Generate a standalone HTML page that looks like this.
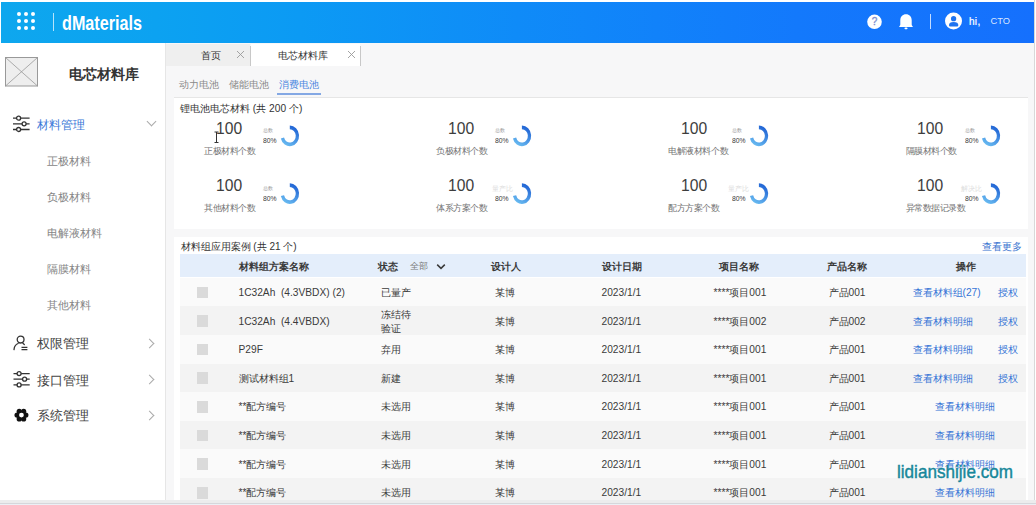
<!DOCTYPE html>
<html><head><meta charset="utf-8">
<style>
*{margin:0;padding:0;box-sizing:border-box}
html,body{width:1036px;height:505px;overflow:hidden;background:#fff;font-family:"Liberation Sans",sans-serif;color:#333}
.a{position:absolute;white-space:nowrap;line-height:1}
#hdr{position:absolute;left:1px;top:2px;width:1033px;height:41px;background:linear-gradient(90deg,#0ea7ee 0%,#0ca2f1 15%,#0c9af4 29%,#0f8bf8 50%,#1379fc 77%,#1570fd 100%)}
.dot{position:absolute;width:4px;height:4px;border-radius:50%;background:#fff}
#side{position:absolute;left:0;top:43px;width:166px;height:457px;background:#fff;border-right:1.5px solid #e6e6e6}
#main{position:absolute;left:166px;top:43px;width:868px;height:457px;background:#f7f7f8}
.card{position:absolute;background:#fff}
.sub{color:#858585;font-size:10.8px}
.mi{color:#444;font-size:13px}
.chev{position:absolute;width:7px;height:7px;border-right:1px solid #aaa;border-bottom:1px solid #aaa}
.num{position:absolute;font-size:17px;color:#3d3d3d;line-height:1;transform:scaleX(.92);transform-origin:0 0}
.lbl{position:absolute;font-size:9px;letter-spacing:-.45px;color:#747474;line-height:1;white-space:nowrap}
.pct{position:absolute;font-size:8px;color:#3a3a3a;line-height:1;transform:scaleX(.85);transform-origin:0 0}
.tiny{position:absolute;font-size:4.5px;color:#999;line-height:1;white-space:nowrap}
.donut{position:absolute;width:22px;height:22px}
.tiny2{position:absolute;font-size:7px;color:#ddd;line-height:1;white-space:nowrap}
.th{position:absolute;font-size:10.2px;font-weight:bold;color:#3a3a3a;line-height:1;white-space:nowrap}
.td{position:absolute;font-size:10.2px;color:#3a3a3a;line-height:1;white-space:nowrap}
.lk{position:absolute;font-size:10.2px;color:#3574d6;line-height:1;white-space:nowrap}
.row{position:absolute;left:6px;width:845px}
.cb{position:absolute;left:23px;width:10px;height:11px;background:#dcdcdc}
</style></head><body>

<!-- header -->
<div id="hdr">
  <div class="dot" style="left:16px;top:9.9px"></div><div class="dot" style="left:23px;top:9.9px"></div><div class="dot" style="left:29.5px;top:9.9px"></div>
  <div class="dot" style="left:16px;top:16.9px"></div><div class="dot" style="left:23px;top:16.9px"></div><div class="dot" style="left:29.5px;top:16.9px"></div>
  <div class="dot" style="left:16px;top:23.9px"></div><div class="dot" style="left:23px;top:23.9px"></div><div class="dot" style="left:29.5px;top:23.9px"></div>
  <div style="position:absolute;left:52px;top:11px;width:1px;height:18px;background:rgba(255,255,255,.7)"></div>
  <div class="a" style="left:61px;top:10px;font-size:21px;font-weight:bold;color:#fff;transform:scaleX(.77);transform-origin:0 0">dMaterials</div>
  <svg style="position:absolute;left:863.7px;top:9.6px" width="20" height="20" viewBox="0 0 20 20"><circle cx="9.5" cy="9.8" r="7.3" fill="#fff"/><text x="9.6" y="13.4" text-anchor="middle" font-family="Liberation Sans" font-size="10" fill="#7d8fcf" stroke="#7d8fcf" stroke-width=".35">?</text></svg>
  <svg style="position:absolute;left:894.3px;top:6.6px" width="22" height="22" viewBox="0 0 22 22"><path d="M11 5.3 C7.6 5.3 5.3 7.8 5.3 11.2 L5.3 15.4 C5.3 16.3 4.4 17.1 4 17.9 L18 17.9 C17.6 17.1 16.7 16.3 16.7 15.4 L16.7 11.2 C16.7 7.8 14.4 5.3 11 5.3 Z" fill="#fff"/><rect x="9.5" y="18.5" width="3" height="1.7" rx=".8" fill="#fff"/></svg>
  <div style="position:absolute;left:928.5px;top:12px;width:1.2px;height:15px;background:rgba(255,255,255,.75)"></div>
  <svg style="position:absolute;left:941.3px;top:9px" width="24" height="24" viewBox="0 0 24 24"><circle cx="11.5" cy="10.1" r="8.5" fill="#fff"/><circle cx="11.6" cy="7.7" r="2.65" fill="#1f74f0"/><path d="M7 14 C7 12 8.6 10.9 11.6 10.9 C14.6 10.9 16.3 12 16.3 14 L16.3 14.2 C16.3 15.1 15.7 15.6 14.8 15.6 L8.5 15.6 C7.6 15.6 7 15.1 7 14.2 Z" fill="#1f74f0"/></svg>
  <div class="a" style="left:968px;top:15px;font-size:10px;color:#fff;-webkit-text-stroke:.2px #fff;letter-spacing:.3px">hi,</div>
  <div class="a" style="left:989.5px;top:14.8px;font-size:9.3px;color:rgba(255,255,255,.85)">CTO</div>
</div>

<div id="side">
  <svg style="position:absolute;left:5px;top:14px" width="34" height="30" viewBox="0 0 34 30"><rect x=".5" y=".5" width="32" height="28.5" fill="#eeeeee" stroke="#999" stroke-width="1"/><path d="M.5 .5 L32.5 29 M32.5 .5 L.5 29" stroke="#999" stroke-width=".8"/></svg>
  <div class="a" style="left:69px;top:24.5px;font-size:13.8px;font-weight:bold;color:#333">电芯材料库</div>
  <svg style="position:absolute;left:12px;top:72px" width="20" height="18" viewBox="0 0 20 18"><g stroke="#333" stroke-width="1.3" fill="#fff"><path d="M1 3.2H17.6M1 8.8H17.6M1 14.5H17.6"/><circle cx="6.6" cy="3.2" r="2"/><circle cx="12.1" cy="8.8" r="2"/><circle cx="6.6" cy="14.5" r="2"/></g></svg>
  <div class="a" style="left:37px;top:77px;font-size:11.5px;color:#3b78d8">材料管理</div>
  <div class="chev" style="left:148px;top:75px;transform:rotate(45deg)"></div>
  <div class="a sub" style="left:46.5px;top:113px">正极材料</div>
  <div class="a sub" style="left:46.5px;top:149px">负极材料</div>
  <div class="a sub" style="left:46.5px;top:185px">电解液材料</div>
  <div class="a sub" style="left:46.5px;top:221px">隔膜材料</div>
  <div class="a sub" style="left:46.5px;top:257px">其他材料</div>
  <svg style="position:absolute;left:12px;top:289px" width="20" height="20" viewBox="0 0 20 20"><g stroke="#333" stroke-width="1.3" fill="none" stroke-linecap="round"><circle cx="8.6" cy="7.6" r="3.4"/><path d="M2 17.6 C2.3 14.2 4 12.3 6.1 11.5 M10.9 11.3 L12.3 12.5"/><path d="M9.5 15.45H15.4M9.5 17.6H15.4" stroke-linecap="butt"/></g></svg>
  <div class="a mi" style="left:37px;top:294px">权限管理</div>
  <div class="chev" style="left:146px;top:297px;transform:rotate(-45deg)"></div>
  <svg style="position:absolute;left:12px;top:326.5px" width="20" height="18" viewBox="0 0 20 18"><g stroke="#333" stroke-width="1.3" fill="#fff"><path d="M1.5 3.6H17.7M1.5 9.2H17.7M1.5 14.9H17.7"/><circle cx="7.1" cy="3.6" r="2"/><circle cx="12.6" cy="9.2" r="2"/><circle cx="7.1" cy="14.9" r="2"/></g></svg>
  <div class="a mi" style="left:37px;top:331px">接口管理</div>
  <div class="chev" style="left:146px;top:333px;transform:rotate(-45deg)"></div>
  <svg style="position:absolute;left:13px;top:364px" width="17" height="17" viewBox="0 0 17 17"><g fill="#111"><circle cx="12.85" cy="8.10" r="2.6"/><circle cx="10.65" cy="11.91" r="2.6"/><circle cx="6.25" cy="11.91" r="2.6"/><circle cx="4.05" cy="8.10" r="2.6"/><circle cx="6.25" cy="4.29" r="2.6"/><circle cx="10.65" cy="4.29" r="2.6"/><circle cx="8.45" cy="8.1" r="4.2"/></g><circle cx="8.45" cy="8.1" r="2.4" fill="#fff"/></svg>
  <div class="a mi" style="left:37px;top:366px">系统管理</div>
  <div class="chev" style="left:146px;top:369px;transform:rotate(-45deg)"></div>
</div>
<div id="main"></div>
<div style="position:absolute;left:166px;top:44px;width:84px;height:22px;background:#efefef"></div>
<div style="position:absolute;left:251px;top:44px;width:109px;height:22px;background:#fff"></div>
<div style="position:absolute;left:249.5px;top:46px;width:1px;height:20px;background:#c8c8c8"></div>
<div style="position:absolute;left:360px;top:46px;width:1px;height:20px;background:#c8c8c8"></div>
<div class="a" style="left:201px;top:50.6px;font-size:10px;color:#333">首页</div>
<svg style="position:absolute;left:236px;top:49.5px" width="9" height="9" viewBox="0 0 9 9"><path d="M1 1L8 8M8 1L1 8" stroke="#9a9a9a" stroke-width=".9"/></svg>
<div class="a" style="left:277.5px;top:50.6px;font-size:10px;color:#333">电芯材料库</div>
<svg style="position:absolute;left:347px;top:49.5px" width="9" height="9" viewBox="0 0 9 9"><path d="M1 1L8 8M8 1L1 8" stroke="#9a9a9a" stroke-width=".9"/></svg>

<div class="a" style="left:178.7px;top:79.5px;font-size:10.2px;color:#8a8a8a">动力电池</div>
<div class="a" style="left:229px;top:79.5px;font-size:10.2px;color:#8a8a8a">储能电池</div>
<div class="a" style="left:278.5px;top:79.5px;font-size:10.2px;color:#4a86e0">消费电池</div>
<div style="position:absolute;left:276.5px;top:93px;width:44.5px;height:1.6px;background:#84a8e4"></div>
<div style="position:absolute;left:174px;top:96.5px;width:854px;height:1px;background:#e6e6e6"></div>

<div class="card" style="left:174px;top:97.5px;width:854px;height:131px"></div>
<div class="a" style="left:180px;top:103.5px;font-size:10.2px;color:#333">锂电池电芯材料 (共 200 个)</div>


<!--KPI-->
<svg width="0" height="0" style="position:absolute"><defs><linearGradient id="dg" x1="0.7" y1="0" x2="0.2" y2="1"><stop offset="0" stop-color="#2468d6"/><stop offset="1" stop-color="#66b8f0"/></linearGradient></defs></svg>
<div class="num" style="left:216.1px;top:119.6px">100</div>
<div class="lbl" style="left:204.0px;top:147.0px">正极材料个数</div>
<div class="tiny" style="left:263.0px;top:129.0px">总数</div>
<div class="pct" style="left:263.0px;top:137.0px">80%</div>
<svg style="position:absolute;left:0;top:0;overflow:visible" width="1" height="1"><path transform="translate(289.80 135.90) scale(1 1.12) translate(-289.80 -135.90)" d="M289.80 128.30 A7.6 7.6 0 1 1 282.43 137.74" fill="none" stroke="url(#dg)" stroke-width="3.3"/></svg>
<div class="num" style="left:216.1px;top:177.2px">100</div>
<div class="lbl" style="left:204.0px;top:204.2px">其他材料个数</div>
<div class="tiny" style="left:263.0px;top:186.6px">总数</div>
<div class="pct" style="left:263.0px;top:194.6px">80%</div>
<svg style="position:absolute;left:0;top:0;overflow:visible" width="1" height="1"><path transform="translate(289.80 193.60) scale(1 1.12) translate(-289.80 -193.60)" d="M289.80 186.00 A7.6 7.6 0 1 1 282.43 195.44" fill="none" stroke="url(#dg)" stroke-width="3.3"/></svg>
<div class="num" style="left:447.7px;top:119.6px">100</div>
<div class="lbl" style="left:436.1px;top:147.0px">负极材料个数</div>
<div class="tiny" style="left:495.2px;top:129.0px">总数</div>
<div class="pct" style="left:495.2px;top:137.0px">80%</div>
<svg style="position:absolute;left:0;top:0;overflow:visible" width="1" height="1"><path transform="translate(521.90 135.90) scale(1 1.12) translate(-521.90 -135.90)" d="M521.90 128.30 A7.6 7.6 0 1 1 514.53 137.74" fill="none" stroke="url(#dg)" stroke-width="3.3"/></svg>
<div class="num" style="left:447.7px;top:177.2px">100</div>
<div class="lbl" style="left:436.1px;top:204.2px">体系方案个数</div>
<div class="tiny2" style="left:491.7px;top:184.8px">量产比</div>
<div class="pct" style="left:495.2px;top:194.6px">80%</div>
<svg style="position:absolute;left:0;top:0;overflow:visible" width="1" height="1"><path transform="translate(521.90 193.60) scale(1 1.12) translate(-521.90 -193.60)" d="M521.90 186.00 A7.6 7.6 0 1 1 514.53 195.44" fill="none" stroke="url(#dg)" stroke-width="3.3"/></svg>
<div class="num" style="left:680.5px;top:119.6px">100</div>
<div class="lbl" style="left:668.3px;top:147.0px">电解液材料个数</div>
<div class="tiny" style="left:731.7px;top:129.0px">总数</div>
<div class="pct" style="left:731.7px;top:137.0px">80%</div>
<svg style="position:absolute;left:0;top:0;overflow:visible" width="1" height="1"><path transform="translate(758.90 135.90) scale(1 1.12) translate(-758.90 -135.90)" d="M758.90 128.30 A7.6 7.6 0 1 1 751.53 137.74" fill="none" stroke="url(#dg)" stroke-width="3.3"/></svg>
<div class="num" style="left:680.5px;top:177.2px">100</div>
<div class="lbl" style="left:668.3px;top:204.2px">配方方案个数</div>
<div class="tiny2" style="left:728.2px;top:184.8px">量产比</div>
<div class="pct" style="left:731.7px;top:194.6px">80%</div>
<svg style="position:absolute;left:0;top:0;overflow:visible" width="1" height="1"><path transform="translate(758.90 193.60) scale(1 1.12) translate(-758.90 -193.60)" d="M758.90 186.00 A7.6 7.6 0 1 1 751.53 195.44" fill="none" stroke="url(#dg)" stroke-width="3.3"/></svg>
<div class="num" style="left:917.0px;top:119.6px">100</div>
<div class="lbl" style="left:905.5px;top:147.0px">隔膜材料个数</div>
<div class="tiny" style="left:964.5px;top:129.0px">总数</div>
<div class="pct" style="left:964.5px;top:137.0px">80%</div>
<svg style="position:absolute;left:0;top:0;overflow:visible" width="1" height="1"><path transform="translate(990.90 135.90) scale(1 1.12) translate(-990.90 -135.90)" d="M990.90 128.30 A7.6 7.6 0 1 1 983.53 137.74" fill="none" stroke="url(#dg)" stroke-width="3.3"/></svg>
<div class="num" style="left:917.0px;top:177.2px">100</div>
<div class="lbl" style="left:905.5px;top:204.2px">异常数据记录数</div>
<div class="tiny2" style="left:961.0px;top:184.8px">解决比</div>
<div class="pct" style="left:964.5px;top:194.6px">80%</div>
<svg style="position:absolute;left:0;top:0;overflow:visible" width="1" height="1"><path transform="translate(990.90 193.60) scale(1 1.12) translate(-990.90 -193.60)" d="M990.90 186.00 A7.6 7.6 0 1 1 983.53 195.44" fill="none" stroke="url(#dg)" stroke-width="3.3"/></svg>
<svg style="position:absolute;left:212.5px;top:131px" width="8" height="13" viewBox="0 0 8 13"><path d="M1.5 1H5.5M3.5 1V11.5M1.5 11.5H5.5" stroke="#333" stroke-width="1" fill="none"/></svg>
<div class="card" style="left:174px;top:237px;width:854px;height:263px"></div>
<div class="a" style="left:180.5px;top:242px;font-size:10px;color:#333">材料组应用案例 (共 21 个)</div>
<div class="a" style="left:981.5px;top:241.5px;font-size:10.2px;color:#3a74d0">查看更多</div>
<div style="position:absolute;left:180px;top:254.2px;width:845.5px;height:22.5px;background:#e4eefb"></div>
<div style="position:absolute;left:180px;top:277.70px;width:845.5px;height:28.63px;background:#fafafa"></div>
<div style="position:absolute;left:180px;top:306.33px;width:845.5px;height:28.63px;background:#f3f3f3"></div>
<div style="position:absolute;left:180px;top:334.96px;width:845.5px;height:28.63px;background:#fafafa"></div>
<div style="position:absolute;left:180px;top:363.59px;width:845.5px;height:28.63px;background:#f3f3f3"></div>
<div style="position:absolute;left:180px;top:392.22px;width:845.5px;height:28.63px;background:#fafafa"></div>
<div style="position:absolute;left:180px;top:420.85px;width:845.5px;height:28.63px;background:#f3f3f3"></div>
<div style="position:absolute;left:180px;top:449.48px;width:845.5px;height:28.63px;background:#fafafa"></div>
<div style="position:absolute;left:180px;top:478.11px;width:845.5px;height:28.63px;background:#f3f3f3"></div>
<div class="th" style="left:239.0px;top:262px">材料组方案名称</div>
<div class="th" style="left:377.6px;top:262px">状态</div>
<div class="th" style="left:490.9px;top:262px">设计人</div>
<div class="th" style="left:602.3px;top:262px">设计日期</div>
<div class="th" style="left:719.0px;top:262px">项目名称</div>
<div class="th" style="left:826.8px;top:262px">产品名称</div>
<div class="th" style="left:955.8px;top:262px">操作</div>
<div class="a" style="left:409.8px;top:261.8px;font-size:9px;color:#7a7a7a">全部</div>
<svg style="position:absolute;left:435px;top:262px" width="12" height="9" viewBox="0 0 12 9"><path d="M2.2 2.6L6 6.4L9.8 2.6" stroke="#3a3a3a" stroke-width="1.5" fill="none"/></svg>
<div style="position:absolute;left:196.5px;top:286.60px;width:11px;height:11.5px;background:#dadada"></div>
<div class="td" style="left:238.5px;top:287.90px">1C32Ah&nbsp;&nbsp;(4.3VBDX)&nbsp;(2)</div>
<div class="td" style="left:380.5px;top:287.90px">已量产</div>
<div class="td" style="left:494.5px;top:287.90px">某博</div>
<div class="td" style="left:601.5px;top:287.90px">2023/1/1</div>
<div class="td" style="left:713.5px;top:287.90px">****项目001</div>
<div class="td" style="left:828.5px;top:287.90px">产品001</div>
<div class="lk" style="left:912.5px;top:287.90px">查看材料组(27)</div>
<div class="lk" style="left:998px;top:287.90px">授权</div>
<div style="position:absolute;left:196.5px;top:315.23px;width:11px;height:11.5px;background:#dadada"></div>
<div class="td" style="left:238.5px;top:316.53px">1C32Ah&nbsp;&nbsp;(4.4VBDX)</div>
<div class="td" style="left:380.5px;top:309.53px">冻结待</div>
<div class="td" style="left:380.5px;top:323.53px">验证</div>
<div class="td" style="left:494.5px;top:316.53px">某博</div>
<div class="td" style="left:601.5px;top:316.53px">2023/1/1</div>
<div class="td" style="left:713.5px;top:316.53px">****项目002</div>
<div class="td" style="left:828.5px;top:316.53px">产品002</div>
<div class="lk" style="left:912.5px;top:316.53px">查看材料明细</div>
<div class="lk" style="left:998px;top:316.53px">授权</div>
<div style="position:absolute;left:196.5px;top:343.86px;width:11px;height:11.5px;background:#dadada"></div>
<div class="td" style="left:238.5px;top:345.16px">P29F</div>
<div class="td" style="left:380.5px;top:345.16px">弃用</div>
<div class="td" style="left:494.5px;top:345.16px">某博</div>
<div class="td" style="left:601.5px;top:345.16px">2023/1/1</div>
<div class="td" style="left:713.5px;top:345.16px">****项目001</div>
<div class="td" style="left:828.5px;top:345.16px">产品001</div>
<div class="lk" style="left:912.5px;top:345.16px">查看材料明细</div>
<div class="lk" style="left:998px;top:345.16px">授权</div>
<div style="position:absolute;left:196.5px;top:372.49px;width:11px;height:11.5px;background:#dadada"></div>
<div class="td" style="left:238.5px;top:373.79px">测试材料组1</div>
<div class="td" style="left:380.5px;top:373.79px">新建</div>
<div class="td" style="left:494.5px;top:373.79px">某博</div>
<div class="td" style="left:601.5px;top:373.79px">2023/1/1</div>
<div class="td" style="left:713.5px;top:373.79px">****项目001</div>
<div class="td" style="left:828.5px;top:373.79px">产品001</div>
<div class="lk" style="left:912.5px;top:373.79px">查看材料明细</div>
<div class="lk" style="left:998px;top:373.79px">授权</div>
<div style="position:absolute;left:196.5px;top:401.12px;width:11px;height:11.5px;background:#dadada"></div>
<div class="td" style="left:238.5px;top:402.42px">**配方编号</div>
<div class="td" style="left:380.5px;top:402.42px">未选用</div>
<div class="td" style="left:494.5px;top:402.42px">某博</div>
<div class="td" style="left:601.5px;top:402.42px">2023/1/1</div>
<div class="td" style="left:713.5px;top:402.42px">****项目001</div>
<div class="td" style="left:828.5px;top:402.42px">产品001</div>
<div class="lk" style="left:935px;top:402.42px">查看材料明细</div>
<div style="position:absolute;left:196.5px;top:429.75px;width:11px;height:11.5px;background:#dadada"></div>
<div class="td" style="left:238.5px;top:431.05px">**配方编号</div>
<div class="td" style="left:380.5px;top:431.05px">未选用</div>
<div class="td" style="left:494.5px;top:431.05px">某博</div>
<div class="td" style="left:601.5px;top:431.05px">2023/1/1</div>
<div class="td" style="left:713.5px;top:431.05px">****项目001</div>
<div class="td" style="left:828.5px;top:431.05px">产品001</div>
<div class="lk" style="left:935px;top:431.05px">查看材料明细</div>
<div style="position:absolute;left:196.5px;top:458.38px;width:11px;height:11.5px;background:#dadada"></div>
<div class="td" style="left:238.5px;top:459.68px">**配方编号</div>
<div class="td" style="left:380.5px;top:459.68px">未选用</div>
<div class="td" style="left:494.5px;top:459.68px">某博</div>
<div class="td" style="left:601.5px;top:459.68px">2023/1/1</div>
<div class="td" style="left:713.5px;top:459.68px">****项目001</div>
<div class="td" style="left:828.5px;top:459.68px">产品001</div>
<div class="lk" style="left:935px;top:459.68px">查看材料明细</div>
<div style="position:absolute;left:196.5px;top:487.01px;width:11px;height:11.5px;background:#dadada"></div>
<div class="td" style="left:238.5px;top:488.31px">**配方编号</div>
<div class="td" style="left:380.5px;top:488.31px">未选用</div>
<div class="td" style="left:494.5px;top:488.31px">某博</div>
<div class="td" style="left:601.5px;top:488.31px">2023/1/1</div>
<div class="td" style="left:713.5px;top:488.31px">****项目001</div>
<div class="td" style="left:828.5px;top:488.31px">产品001</div>
<div class="lk" style="left:935px;top:488.31px">查看材料明细</div>
<div class="a" style="left:896.7px;top:462.3px;font-size:19px;color:#17879a;-webkit-text-stroke:.45px #17879a;transform:scaleX(.9);transform-origin:0 0;text-shadow:0 0 1.5px #fff">lidianshijie.com</div>
<div style="position:absolute;left:0;top:500px;width:1036px;height:2.5px;background:#ececed"></div>
<div style="position:absolute;left:0;top:502.5px;width:1036px;height:1px;background:#d6d7db"></div>
<div style="position:absolute;left:0;top:503.5px;width:1036px;height:2px;background:#eceff5"></div>
<div style="position:absolute;left:1033.5px;top:0;width:1px;height:500px;background:#d8d8d8"></div>
<div style="position:absolute;left:1034.5px;top:0;width:2px;height:500px;background:#fff"></div>
<!--/KPI-->
</body></html>
